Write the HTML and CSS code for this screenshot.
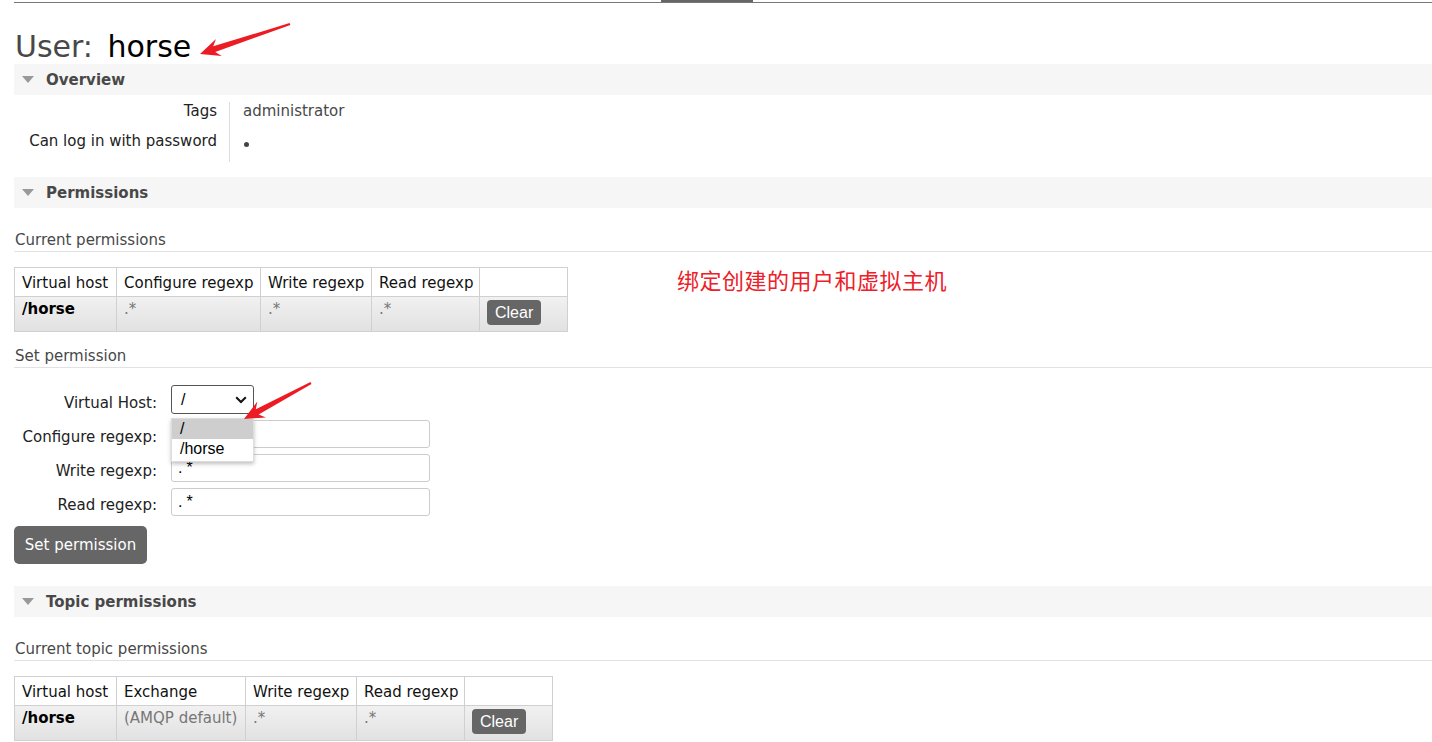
FILE: index.html
```html
<!DOCTYPE html>
<html lang="en">
<head>
<meta charset="utf-8">
<title>User: horse</title>
<link rel="stylesheet" href="styles.css">
</head>
<body>
<div class="nav"><span class="nav-tab"></span></div>
<main class="page">
  <h1 class="title"><span class="title-label">User:</span> horse</h1>

  <section class="section">
    <h2 class="section-head"><span class="tri"></span>Overview</h2>
    <div class="kv">
      <div class="kv-keys">
        <div class="kv-row">Tags</div>
        <div class="kv-row">Can log in with password</div>
      </div>
      <div class="kv-vals">
        <div class="kv-row">administrator</div>
        <div class="kv-row"><span class="dot" title="yes"></span></div>
      </div>
    </div>
  </section>

  <section class="section section-gap">
    <h2 class="section-head"><span class="tri"></span>Permissions</h2>
    <h3 class="sub">Current permissions</h3>
    <table class="perm">
      <colgroup><col class="c-vh"><col class="c-conf"><col class="c-w"><col class="c-r"><col class="c-act"></colgroup>
      <thead>
        <tr><th>Virtual host</th><th>Configure regexp</th><th>Write regexp</th><th>Read regexp</th><th></th></tr>
      </thead>
      <tbody>
        <tr><td class="vh">/horse</td><td class="rx">.*</td><td class="rx">.*</td><td class="rx">.*</td><td><button class="btn-clear">Clear</button></td></tr>
      </tbody>
    </table>

    <h3 class="sub sub-tight">Set permission</h3>
    <form class="perm-form">
      <label class="f-label" for="vh">Virtual Host:</label>
      <div class="select-wrap">
        <div class="select" id="vh">
          <span>/</span>
          <svg class="chev" width="12" height="8" viewBox="0 0 12 8"><path d="M1.2 1.2 L6 6 L10.8 1.2" fill="none" stroke="#111" stroke-width="2"/></svg>
        </div>
        <ul class="dropdown">
          <li class="opt opt-active">/</li>
          <li class="opt">/horse</li>
        </ul>
      </div>
      <label class="f-label" for="conf">Configure regexp:</label>
      <input class="f-input" id="conf" value=".*">
      <label class="f-label" for="wr">Write regexp:</label>
      <input class="f-input" id="wr" value=".*">
      <label class="f-label" for="rd">Read regexp:</label>
      <input class="f-input" id="rd" value=".*">
    </form>
    <button class="btn-main">Set permission</button>
  </section>

  <section class="section section-gap2">
    <h2 class="section-head"><span class="tri"></span>Topic permissions</h2>
    <h3 class="sub">Current topic permissions</h3>
    <table class="perm perm-topic">
      <colgroup><col class="c-vh"><col class="c-ex"><col class="c-w"><col class="c-r"><col class="c-act"></colgroup>
      <thead>
        <tr><th>Virtual host</th><th>Exchange</th><th>Write regexp</th><th>Read regexp</th><th></th></tr>
      </thead>
      <tbody>
        <tr><td class="vh">/horse</td><td class="rx">(AMQP default)</td><td class="rx">.*</td><td class="rx">.*</td><td><button class="btn-clear">Clear</button></td></tr>
      </tbody>
    </table>
  </section>
</main>

<div class="note">绑定创建的用户和虚拟主机</div>
<svg class="annot" width="1432" height="742" viewBox="0 0 1432 742">
  <polygon fill="#ec1c24" points="200,54 221.8,56 215.2,51.9 290.4,24.9 289.6,23.1 213.2,46.3 216,39"/>
  <polygon fill="#ec1c24" points="244,419 265.9,417.4 258.6,414.5 311.5,383.9 310.5,382.1 255.8,409.3 257.3,401.6"/>
</svg>
</body>
</html>
```

FILE: styles.css
```css
* { box-sizing: border-box; }
html, body { margin: 0; padding: 0; background: #fff; }
body {
  font-family: "DejaVu Sans", Verdana, sans-serif;
  font-size: 15px;
  color: #222;
  position: relative;
  min-height: 742px;
}

.nav {
  margin-left: 14px;
  border-bottom: 1px solid #777;
  display: flex;
}
.nav-tab {
  display: block;
  margin-left: 647px;
  width: 92px;
  height: 2px;
  background: #666;
}

.page { padding-left: 14px; }

.title {
  margin: 26px 0 0;
  font-size: 30px;
  line-height: 35px;
  font-weight: normal;
  color: #000;
  padding-left: 1px;
}
.title-label { color: #484848; margin-right: 5px; }

.section-head {
  margin: 0;
  height: 31px;
  background: #f6f6f6;
  display: flex;
  align-items: center;
  gap: 12px;
  padding-left: 8px;
  font-size: 15px;
  font-weight: bold;
  color: #484848;
}
.tri {
  width: 0; height: 0;
  border-left: 6px solid transparent;
  border-right: 6px solid transparent;
  border-top: 7px solid #999;
}
.section-gap { margin-top: 15px; }
.section-gap2 { margin-top: 22px; }

.kv { display: flex; margin-top: 7px; }
.kv-keys {
  width: 215px;
  text-align: right;
  padding-right: 12px;
  padding-bottom: 12px;
  color: #222;
}
.kv-vals {
  border-left: 1px solid #ddd;
  padding-left: 13px;
  padding-bottom: 12px;
  color: #484848;
}
.kv-row { line-height: 18px; }
.kv-row + .kv-row { margin-top: 12px; }
.dot {
  display: inline-block;
  width: 5px;
  height: 5px;
  border-radius: 50%;
  background: #444;
  position: relative;
  top: 1px;
  left: 1px;
}

.sub {
  margin: 23px 0 0;
  font-size: 15px;
  font-weight: normal;
  line-height: 18px;
  color: #484848;
  padding-left: 1px;
  padding-bottom: 2px;
  border-bottom: 1px solid #e2e2e2;
}
.sub-tight { margin-top: 15px; }

.perm {
  margin-top: 15px;
  border-collapse: collapse;
  table-layout: fixed;
  width: 553px;
}
.perm-topic { width: 538px; }
.c-vh { width: 102px; }
.c-conf { width: 144px; }
.c-ex { width: 129px; }
.c-w { width: 111px; }
.c-r { width: 108px; }
.c-act { width: 88px; }
.perm th, .perm td {
  border: 1px solid #d0d0d0;
  text-align: left;
  white-space: nowrap;
  overflow: hidden;
}
.perm th {
  font-weight: normal;
  color: #111;
  line-height: 18px;
  padding: 6px 6px 4px 7px;
  background: #fff;
}
.perm tbody tr { background: linear-gradient(#f1f1f1, #e1e1e1); }
.perm td {
  vertical-align: top;
  line-height: 18px;
  padding: 3px 6px 6px 7px;
}
.perm .vh { font-weight: bold; color: #000; }
.perm .rx { color: #777; }
.btn-clear {
  display: block;
  height: 25px;
  padding: 0 8px;
  border: none;
  border-radius: 4px;
  background: #666;
  color: #fff;
  font-family: "Liberation Sans", Arial, sans-serif;
  font-size: 16px;
  margin-top: 0;
}

.perm-form {
  margin-top: 17px;
  display: grid;
  grid-template-columns: 143px 259px;
  column-gap: 14px;
  row-gap: 6px;
  align-items: center;
}
.f-label { text-align: right; color: #222; padding-top: 6px; }
.select-wrap { position: relative; width: 83px; z-index: 5; }
.select {
  height: 29px;
  border: 1px solid #555;
  border-radius: 3px;
  display: flex;
  align-items: center;
  justify-content: space-between;
  padding: 0 6px 0 9px;
  font-family: "Liberation Sans", Arial, sans-serif;
  font-size: 16px;
  color: #000;
  background: #fff;
}
.dropdown {
  position: absolute;
  top: 33px;
  left: 0;
  width: 83px;
  margin: 0;
  padding: 0 0 2px;
  list-style: none;
  background: #fff;
  border: 1px solid #ddd;
  box-shadow: 0 2px 4px rgba(0,0,0,0.25);
  font-family: "Liberation Sans", Arial, sans-serif;
  font-size: 16px;
  color: #000;
}
.opt { height: 20px; line-height: 20px; padding-left: 8px; }
.opt-active { background: #cecece; }
.f-input {
  height: 28px;
  width: 259px;
  border: 1px solid #ccc;
  border-radius: 3px;
  padding: 0 0 0 6px;
  font-family: "Liberation Sans", Arial, sans-serif;
  font-size: 16px;
  letter-spacing: 4px;
  color: #000;
}

.btn-main {
  display: block;
  margin-top: 10px;
  height: 38px;
  width: 133px;
  padding: 0;
  border: none;
  border-radius: 5px;
  background: #666;
  color: #fff;
  font-family: "DejaVu Sans", Verdana, sans-serif;
  font-size: 15px;
}

.note {
  position: absolute;
  left: 677px;
  top: 264px;
  font-family: "Noto Sans CJK SC", sans-serif;
  font-size: 22px;
  letter-spacing: 0.5px;
  line-height: 30px;
  color: #ec2028;
}
.annot {
  position: absolute;
  left: 0;
  top: 0;
  pointer-events: none;
  z-index: 10;
}
```
